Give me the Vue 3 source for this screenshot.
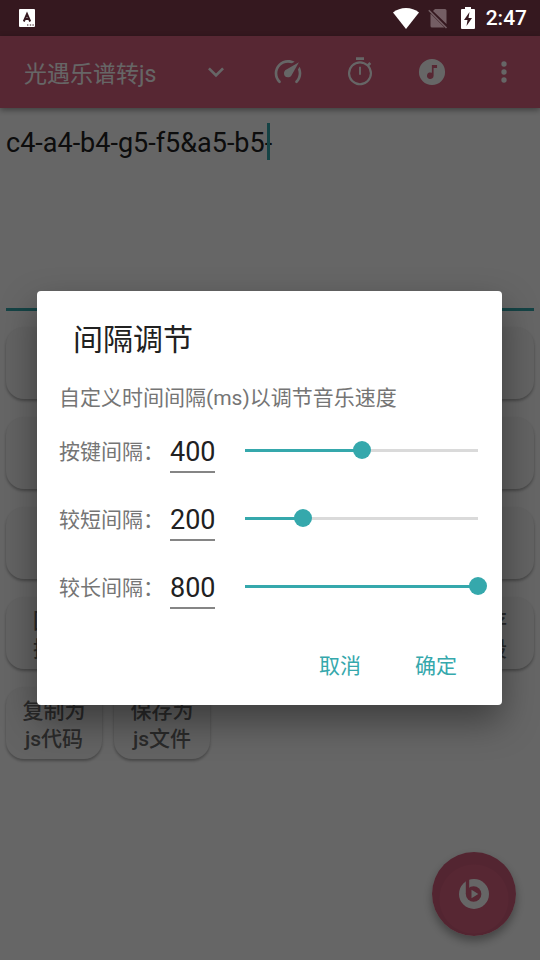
<script setup>
import { ref } from 'vue'

const score = ref('c4-a4-b4-g5-f5&a5-b5-')
const settings = ref([
  { id: 'key', label: '按键间隔：', value: 400 },
  { id: 'short', label: '较短间隔：', value: 200 },
  { id: 'long', label: '较长间隔：', value: 800 },
])
const keys = Array.from({ length: 15 }, (_, i) => i + 1)
const actions = [
  ['回车', '换行'], [], [], [], ['保存', '片段'],
  ['复制为', 'js代码'], ['保存为', 'js文件'],
]
</script>

<template>
  <div class="screen">
    <header class="status">
      <svg class="notice" viewBox="0 0 16 18" aria-hidden="true">
        <rect width="16" height="18" rx="1" fill="#fff" />
        <path d="M4.8 12.5 8 5l3.2 7.5M6 10h4" fill="none" stroke="#35181f" stroke-width="2" />
        <path d="M8 16h1.4M10.8 16h1.4M13.4 16h1.4" stroke="#35181f" stroke-width="1.2" />
      </svg>
      <span class="spacer"></span>
      <svg class="wifi" viewBox="0 0 26 21" aria-hidden="true">
        <path d="M0 4.6C7-1.5 19-1.5 26 4.6L13 21z" fill="#fff" />
      </svg>
      <svg class="sim" viewBox="0 0 20 21" aria-hidden="true">
        <path d="M7 1h10a1.5 1.5 0 0 1 1.5 1.5V16L5 3zM3 6l13.5 13.5H4A1.5 1.5 0 0 1 2.5 18V6z" fill="#745e64" />
        <path d="M.8 2.2 18.5 20" stroke="#745e64" stroke-width="1.6" />
      </svg>
      <svg class="battery" viewBox="0 0 14 22" aria-hidden="true">
        <path d="M4 0h6v2h3q1 0 1 1v18q0 1-1 1H1q-1 0-1-1V3q0-1 1-1h3z" fill="#fff" />
        <path d="M8.5 5 3 13h3.5L5.5 19 11 11H7.5z" fill="#35181f" />
      </svg>
      <time>2:47</time>
    </header>

    <div class="content">
      <nav class="toolbar">
        <h1>光遇乐谱转js</h1>
        <button aria-label="展开">
          <svg viewBox="0 0 24 24"><path d="M7.4 8.6 12 13.2l4.6-4.6L18 10l-6 6-6-6z" fill="#fff" /></svg>
        </button>
        <button aria-label="速度">
          <svg viewBox="0 0 24 24"><path d="M12 16a3 3 0 0 1-3-3c0-1.120.61-2.100 1.500-2.610l9.710-5.620-5.530 9.580c-.5.980-1.510 1.650-2.680 1.650zM12 3c1.810 0 3.500.5 4.970 1.320l-2.100 1.210C14 5.190 13 5 12 5a8 8 0 0 0-8 8c0 2.210.89 4.210 2.340 5.650h.01c.39.390.39 1.020 0 1.410-.39.390-1.030.390-1.420.010A9.970 9.970 0 0 1 2 13 10 10 0 0 1 12 3zm10 10c0 2.760-1.120 5.260-2.930 7.070-.39.380-1.020.380-1.410-.010a.996.996 0 0 1 0-1.410A7.950 7.950 0 0 0 20 13c0-1-.19-2-.54-2.900l1.210-2.100C21.500 9.500 22 11.180 22 13z" fill="#fff" /></svg>
        </button>
        <button aria-label="计时器">
          <svg viewBox="0 0 24 24"><path d="M15 1H9v2h6zm-3.700 13h1.400V8h-1.400zm7.730-6.610 1.420-1.420c-.43-.51-.9-.99-1.410-1.410l-1.420 1.420A9 9 0 1 0 19.030 7.390zM12 20.400a7.400 7.400 0 1 1 0-14.800 7.400 7.400 0 0 1 0 14.800z" fill="#fff" /></svg>
        </button>
        <button aria-label="音乐">
          <svg viewBox="0 0 24 24"><path d="M12 2.200a9.800 9.800 0 1 0 0 19.600 9.800 9.800 0 0 0 0-19.600zM15.800 9H13.200v5.800A2.500 2.500 0 1 1 11.900 12.600V6.700h3.900z" fill="#fff" /></svg>
        </button>
        <button aria-label="更多">
          <svg viewBox="0 0 24 24"><path d="M12 8a2 2 0 1 0 0-4 2 2 0 0 0 0 4zm0 2a2 2 0 1 0 0 4 2 2 0 0 0 0-4zm0 6a2 2 0 1 0 0 4 2 2 0 0 0 0-4z" fill="#fff" /></svg>
        </button>
      </nav>

      <main>
        <div class="editor">
          <textarea v-model="score" aria-label="乐谱" spellcheck="false"></textarea>
          <span class="caret" aria-hidden="true"></span>
        </div>
        <div class="pad">
          <button v-for="k in keys" :key="k" :aria-label="`音符 ${k}`"></button>
          <button v-for="(lines, i) in actions" :key="`a${i}`">
            <span v-for="line in lines" :key="line">{{ line }}</span>
          </button>
        </div>
      </main>

      <button class="fab" aria-label="播放">
        <svg viewBox="0 0 30 30">
          <circle cx="15" cy="15" r="15" fill="#fff" />
          <path d="M6.800 0h3.400v15H6.800z" fill="#da6180" />
          <circle cx="14.600" cy="15" r="7.800" fill="#da6180" />
          <path d="m12.500 10.800 6.800 4.200-6.800 4.200z" fill="#fff" />
        </svg>
      </button>

      <div class="scrim">
        <section class="dialog" role="dialog" aria-labelledby="dialog-title">
          <h2 id="dialog-title">间隔调节</h2>
          <p>自定义时间间隔(ms)以调节音乐速度</p>
          <div v-for="s in settings" :key="s.id" class="setting">
            <label :for="s.id">{{ s.label }}</label>
            <input :id="s.id" v-model.number="s.value" class="number" type="text" inputmode="numeric" />
            <input
              v-model.number="s.value"
              class="slider"
              type="range"
              min="0"
              max="800"
              :aria-label="s.label"
              :style="{ '--fill': `${s.value / 8}%` }"
            />
          </div>
          <div class="buttons">
            <button>取消</button>
            <button>确定</button>
          </div>
        </section>
      </div>
    </div>
  </div>
</template>

<style>
body {
  margin: 0;
}
</style>

<style scoped>
.screen {
  display: flex;
  flex-direction: column;
  min-height: 100vh;
  background: #fff;
  font-family: Roboto, "Noto Sans CJK SC", sans-serif;
}
.screen * {
  box-sizing: border-box;
}
button,
input,
textarea {
  margin: 0;
  padding: 0;
  border: 0;
  outline: 0;
  background: none;
  font: inherit;
}
svg {
  display: block;
}
.status {
  display: flex;
  align-items: center;
  height: 36px;
  padding: 0 13px 0 19px;
  background: #35181f;
  color: #fff;
  font-size: 21px;
  font-weight: 500;
}
.spacer {
  flex: 1;
}
.notice {
  width: 16px;
  height: 18px;
}
.wifi {
  width: 26px;
  height: 21px;
  margin-right: 9px;
}
.sim {
  width: 20px;
  height: 21px;
  margin-right: 13px;
}
.battery {
  width: 14px;
  height: 22px;
  margin-right: 11px;
}
.content {
  position: relative;
  flex: 1;
  display: flex;
  flex-direction: column;
}
.toolbar {
  display: flex;
  align-items: center;
  height: 72px;
  padding-left: 24px;
  background: #da6180;
  box-shadow: 0 2px 6px rgba(0, 0, 0, 0.4);
}
h1 {
  flex: 1;
  margin: 0;
  color: #fff;
  font-size: 23px;
  font-weight: 400;
  white-space: nowrap;
}
.toolbar button {
  width: 72px;
  height: 72px;
  display: grid;
  place-items: center;
}
.toolbar svg {
  width: 32px;
  height: 32px;
}
main {
  padding: 0 6px;
}
.editor {
  position: relative;
  margin-bottom: 16px;
}
textarea {
  display: block;
  width: 100%;
  height: 203px;
  padding-top: 19px;
  border-bottom: 3px solid #35a8ac;
  color: #212121;
  font-size: 27px;
  line-height: 32px;
  resize: none;
}
.caret {
  position: absolute;
  left: 261px;
  top: 15px;
  width: 3px;
  height: 37px;
  background: #35a8ac;
}
.pad {
  display: grid;
  grid-template-columns: repeat(5, 1fr);
  gap: 18px 12px;
}
.pad button {
  display: flex;
  flex-direction: column;
  align-items: center;
  justify-content: center;
  height: 72px;
  padding-top: 3px;
  border-radius: 18px;
  background: #f7f7f7;
  box-shadow: 0 2px 3px rgba(0, 0, 0, 0.3);
  color: #6a6a6a;
  font-size: 21px;
  font-weight: 500;
  line-height: 28px;
}
.fab {
  position: absolute;
  right: 24px;
  bottom: 24px;
  display: grid;
  place-items: center;
  width: 84px;
  height: 84px;
  border-radius: 50%;
  background: radial-gradient(circle at 50% 56%, #da6180 34px, #d05c7a 35px);
  box-shadow: 0 5px 10px rgba(0, 0, 0, 0.35);
}
.fab svg {
  width: 30px;
  height: 30px;
}
.scrim {
  position: absolute;
  inset: 0;
  display: flex;
  align-items: center;
  justify-content: center;
  padding: 0 38px 0 37px;
  background: rgba(0, 0, 0, 0.6);
}
.dialog {
  width: 100%;
  padding: 25px 18px 14px 22px;
  border-radius: 4px;
  background: #fff;
  box-shadow: 0 16px 36px rgba(0, 0, 0, 0.4);
}
h2 {
  margin: 0 0 18px 14px;
  color: #212121;
  font-size: 30px;
  font-weight: 400;
  line-height: 48px;
}
p {
  margin: 0 0 2px;
  color: #757575;
  font-size: 21px;
  line-height: 32px;
  white-space: nowrap;
}
.setting {
  display: flex;
  align-items: center;
  height: 68px;
}
label {
  width: 111px;
  color: #757575;
  font-size: 21px;
  white-space: nowrap;
}
.number {
  width: 45px;
  height: 46px;
  padding-top: 6px;
  margin-right: 21px;
  border-bottom: 2px solid #858585;
  color: #212121;
  font-size: 27px;
}
.slider {
  flex: 1;
  min-width: 0;
  height: 20px;
  margin-right: -3px;
  appearance: none;
}
.slider::-webkit-slider-runnable-track {
  height: 18px;
  background: linear-gradient(to right, #35a8ac var(--fill), #dadada var(--fill)) 9px 50% / calc(100% - 18px) 3px no-repeat;
}
.slider::-webkit-slider-thumb {
  width: 18px;
  height: 18px;
  border-radius: 50%;
  background: #35a8ac;
  appearance: none;
}
.buttons {
  display: flex;
  justify-content: flex-end;
  margin-top: 17px;
}
.buttons button {
  width: 96px;
  height: 54px;
  color: #35a8ac;
  font-size: 21px;
}
</style>
